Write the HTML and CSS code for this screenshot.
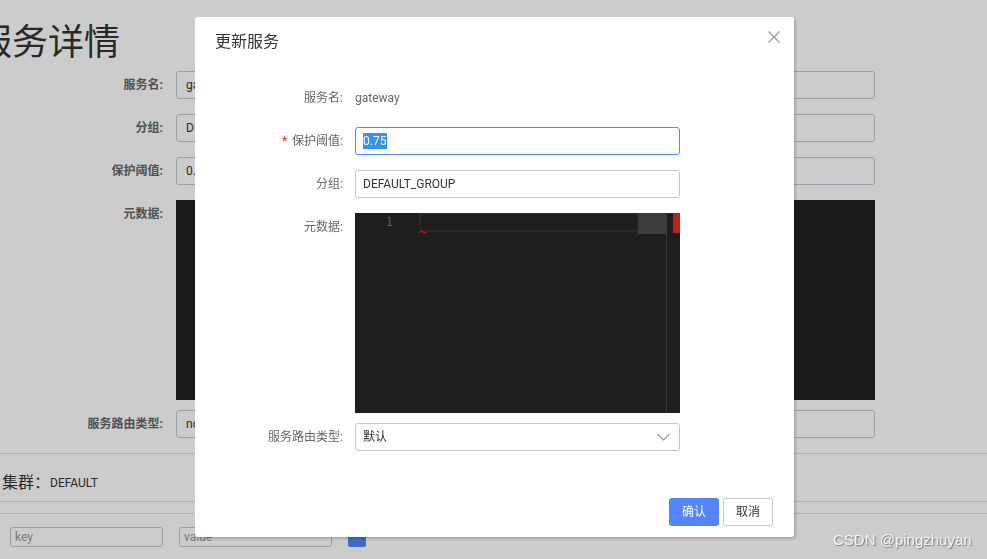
FILE: index.html
```html
<!DOCTYPE html>
<html lang="zh-CN">
<head>
<meta charset="utf-8">
<title>服务详情</title>
<link rel="stylesheet" href="styles.css">
</head>
<body>
<div class="page">
  <h1 class="page-title">服务详情</h1>
  <div class="bg-form">
    <div class="bg-row">
      <div class="bg-label">服务名:</div>
      <div class="bg-input">gateway</div>
    </div>
    <div class="bg-row">
      <div class="bg-label">分组:</div>
      <div class="bg-input">DEFAULT_GROUP</div>
    </div>
    <div class="bg-row">
      <div class="bg-label">保护阈值:</div>
      <div class="bg-input">0.75</div>
    </div>
    <div class="bg-row bg-row-editor">
      <div class="bg-label">元数据:</div>
      <div class="bg-editor"></div>
    </div>
    <div class="bg-row bg-row-last">
      <div class="bg-label">服务路由类型:</div>
      <div class="bg-input">none</div>
    </div>
  </div>
  <div class="bg-sep"></div>
  <div class="cluster">
    <span class="cluster-title">集群：</span>
    <span class="cluster-name">DEFAULT</span>
  </div>
  <div class="bg-sep bg-sep-2"></div>
  <div class="kv-row">
    <div class="kv-input kv-key">key</div>
    <div class="kv-input kv-value">value</div>
    <div class="kv-btn"></div>
  </div>
</div>

<div class="mask"></div>

<div class="dialog">
  <div class="dialog-header">
    <div class="dialog-title">更新服务</div>
    <svg class="dialog-close" width="12" height="12" viewBox="0 0 12 12">
      <path d="M0.5 0.5 L11.5 11.5 M11.5 0.5 L0.5 11.5" stroke="#9a9a9a" stroke-width="1.2" fill="none"/>
    </svg>
  </div>
  <div class="dialog-body">
    <div class="form-row">
      <div class="form-label">服务名:</div>
      <div class="form-text">gateway</div>
    </div>
    <div class="form-row">
      <div class="form-label"><span class="required">*</span>保护阈值:</div>
      <div class="input input-focus"><span class="selected">0.75</span></div>
    </div>
    <div class="form-row">
      <div class="form-label">分组:</div>
      <div class="input">DEFAULT_GROUP</div>
    </div>
    <div class="form-row form-row-editor">
      <div class="form-label">元数据:</div>
      <div class="editor">
        <div class="gutter"><span class="line-no">1</span></div>
        <div class="code">
          <div class="cur-line"></div>
          <svg class="squiggle" width="8" height="4" viewBox="0 0 8 4">
            <path d="M0 3 Q2 0 4 2 T8 2" stroke="#e51400" stroke-width="1" fill="none"/>
          </svg>
        </div>
        <div class="minimap"><div class="slider"></div></div>
        <div class="vscroll"><div class="marker"></div></div>
      </div>
    </div>
    <div class="form-row">
      <div class="form-label">服务路由类型:</div>
      <div class="input select">
        <span>默认</span>
        <svg class="chevron" width="13" height="8" viewBox="0 0 13 8">
          <path d="M0.5 1 L6.5 7 L12.5 1" stroke="#999" stroke-width="1.1" fill="none"/>
        </svg>
      </div>
    </div>
  </div>
  <div class="dialog-footer">
    <div class="btn btn-primary">确认</div>
    <div class="btn btn-normal">取消</div>
  </div>
</div>

<div class="watermark">CSDN @pingzhuyan</div>
</body>
</html>
```

FILE: styles.css
```css
* {
  box-sizing: border-box;
}

html, body {
  margin: 0;
  padding: 0;
  width: 987px;
  height: 559px;
  overflow: hidden;
  background: #ffffff;
  font-family: Roboto, "Noto Sans CJK SC", sans-serif;
  font-size: 12px;
  color: #333;
}

/* ---------- background page ---------- */
.page {
  width: 987px;
}

.page-title {
  margin: 0 0 3px -24px;
  padding-top: 18px;
  font-size: 36px;
  line-height: 50px;
  font-weight: normal;
  color: #333;
  white-space: nowrap;
}

.bg-form {
  display: flex;
  flex-direction: column;
  gap: 15px;
}

.bg-row {
  display: grid;
  grid-template-columns: 163px 699px;
  column-gap: 13px;
  align-items: center;
}

.bg-row-editor {
  align-items: start;
}

.bg-row-last {
  margin-top: -5px;
}

.bg-label {
  text-align: right;
  color: #666;
  font-weight: bold;
  line-height: 28px;
  white-space: nowrap;
}

.bg-input {
  height: 28px;
  border: 1px solid #c4c6cf;
  border-radius: 3px;
  padding-left: 9px;
  line-height: 26px;
  color: #333;
}

.bg-editor {
  height: 200px;
  background: #202020;
}

.bg-sep {
  margin-top: 15px;
  height: 1px;
  background: #dcdee3;
}

.cluster {
  padding: 17px 0 6px 2px;
  line-height: 24px;
  display: flex;
  align-items: center;
}

.cluster-title {
  font-size: 16px;
  color: #333;
}

.cluster-name {
  font-size: 12px;
  color: #333;
}

.bg-sep-2 {
  margin-top: 0;
  box-shadow: 0 12px 0 #dcdee3;
}

.kv-row {
  margin-top: 25px;
  padding-left: 10px;
  display: flex;
  align-items: center;
}

.kv-input {
  height: 20px;
  width: 153px;
  border: 1px solid #c4c6cf;
  border-radius: 3px;
  padding-left: 4px;
  line-height: 18px;
  color: #999;
}

.kv-value {
  margin-left: 16px;
}

.kv-btn {
  margin-left: 16px;
  width: 18px;
  height: 20px;
  background: #5584ff;
  border-radius: 2px;
}

/* ---------- mask ---------- */
.mask {
  position: fixed;
  inset: 0;
  background: rgba(0, 0, 0, 0.2);
}

/* ---------- dialog ---------- */
.dialog {
  position: fixed;
  left: 195px;
  top: 17px;
  width: 599px;
  height: 520px;
  background: #fff;
  border-radius: 3px;
  box-shadow: 2px 2px 3px rgba(0, 0, 0, 0.18);
  display: flex;
  flex-direction: column;
}

.dialog-header {
  display: flex;
  justify-content: space-between;
  align-items: flex-start;
  padding: 15px 14px 0 20px;
}

.dialog-title {
  font-size: 16px;
  line-height: 20px;
  color: #333;
}

.dialog-close {
  display: block;
  margin-top: -1px;
}

.dialog-body {
  margin-top: 32px;
  padding: 0 20px;
  display: flex;
  flex-direction: column;
  gap: 15px;
}

.form-row {
  display: grid;
  grid-template-columns: 128px 325px;
  column-gap: 12px;
  align-items: start;
}

.form-row-editor {
  margin-bottom: -5px;
}

.form-label {
  text-align: right;
  line-height: 28px;
  color: #666;
  white-space: nowrap;
}

.required {
  color: #ff3000;
  margin-right: 5px;
}

.form-text {
  line-height: 28px;
  color: #666;
}

.input {
  height: 28px;
  border: 1px solid #c4c6cf;
  border-radius: 3px;
  padding-left: 7px;
  line-height: 26px;
  color: #333;
}

.input-focus {
  border-color: #5584ff;
}

.selected {
  background: #3390ff;
  color: #fff;
  padding: 1px 1px 1px 0;
}

.select {
  display: flex;
  align-items: center;
  justify-content: space-between;
  padding-right: 9px;
}

.chevron {
  display: block;
}

/* editor */
.editor {
  height: 200px;
  background: #1e1e1e;
  display: flex;
}

.gutter {
  width: 64px;
  text-align: right;
  padding-right: 26px;
}

.line-no {
  display: block;
  font-family: "DejaVu Sans Mono", monospace;
  font-size: 12px;
  line-height: 19px;
  color: #5a5a5a;
}

.code {
  flex: 1;
  display: flex;
  flex-direction: column;
}

.cur-line {
  height: 19px;
  border: 2px solid #282828;
  border-right: none;
}

.squiggle {
  display: block;
  margin-top: -2px;
}

.minimap {
  width: 28px;
}

.slider {
  height: 21px;
  background: #3b3b3b;
}

.vscroll {
  width: 14px;
  border-left: 1px solid #3a3a3a;
  display: flex;
  justify-content: flex-end;
  align-items: flex-start;
}

.marker {
  width: 7px;
  height: 20px;
  background: #c41c1c;
}

/* footer */
.dialog-footer {
  margin-top: auto;
  padding: 0 21px 11px 0;
  display: flex;
  justify-content: flex-end;
  gap: 4px;
}

.btn {
  width: 50px;
  height: 28px;
  border-radius: 3px;
  line-height: 28px;
  text-align: center;
  font-size: 12px;
}

.btn-primary {
  background: #5584ff;
  color: #fff;
}

.btn-normal {
  border: 1px solid #c4c6cf;
  line-height: 26px;
  color: #333;
  background: #fff;
}

/* watermark */
.watermark {
  position: fixed;
  left: 833px;
  top: 530px;
  font-family: "Liberation Sans", sans-serif;
  font-size: 15px;
  line-height: 20px;
  color: #f4f4f4;
  text-shadow: 1px 1px 1px #7a7a7a;
  white-space: nowrap;
}
```
